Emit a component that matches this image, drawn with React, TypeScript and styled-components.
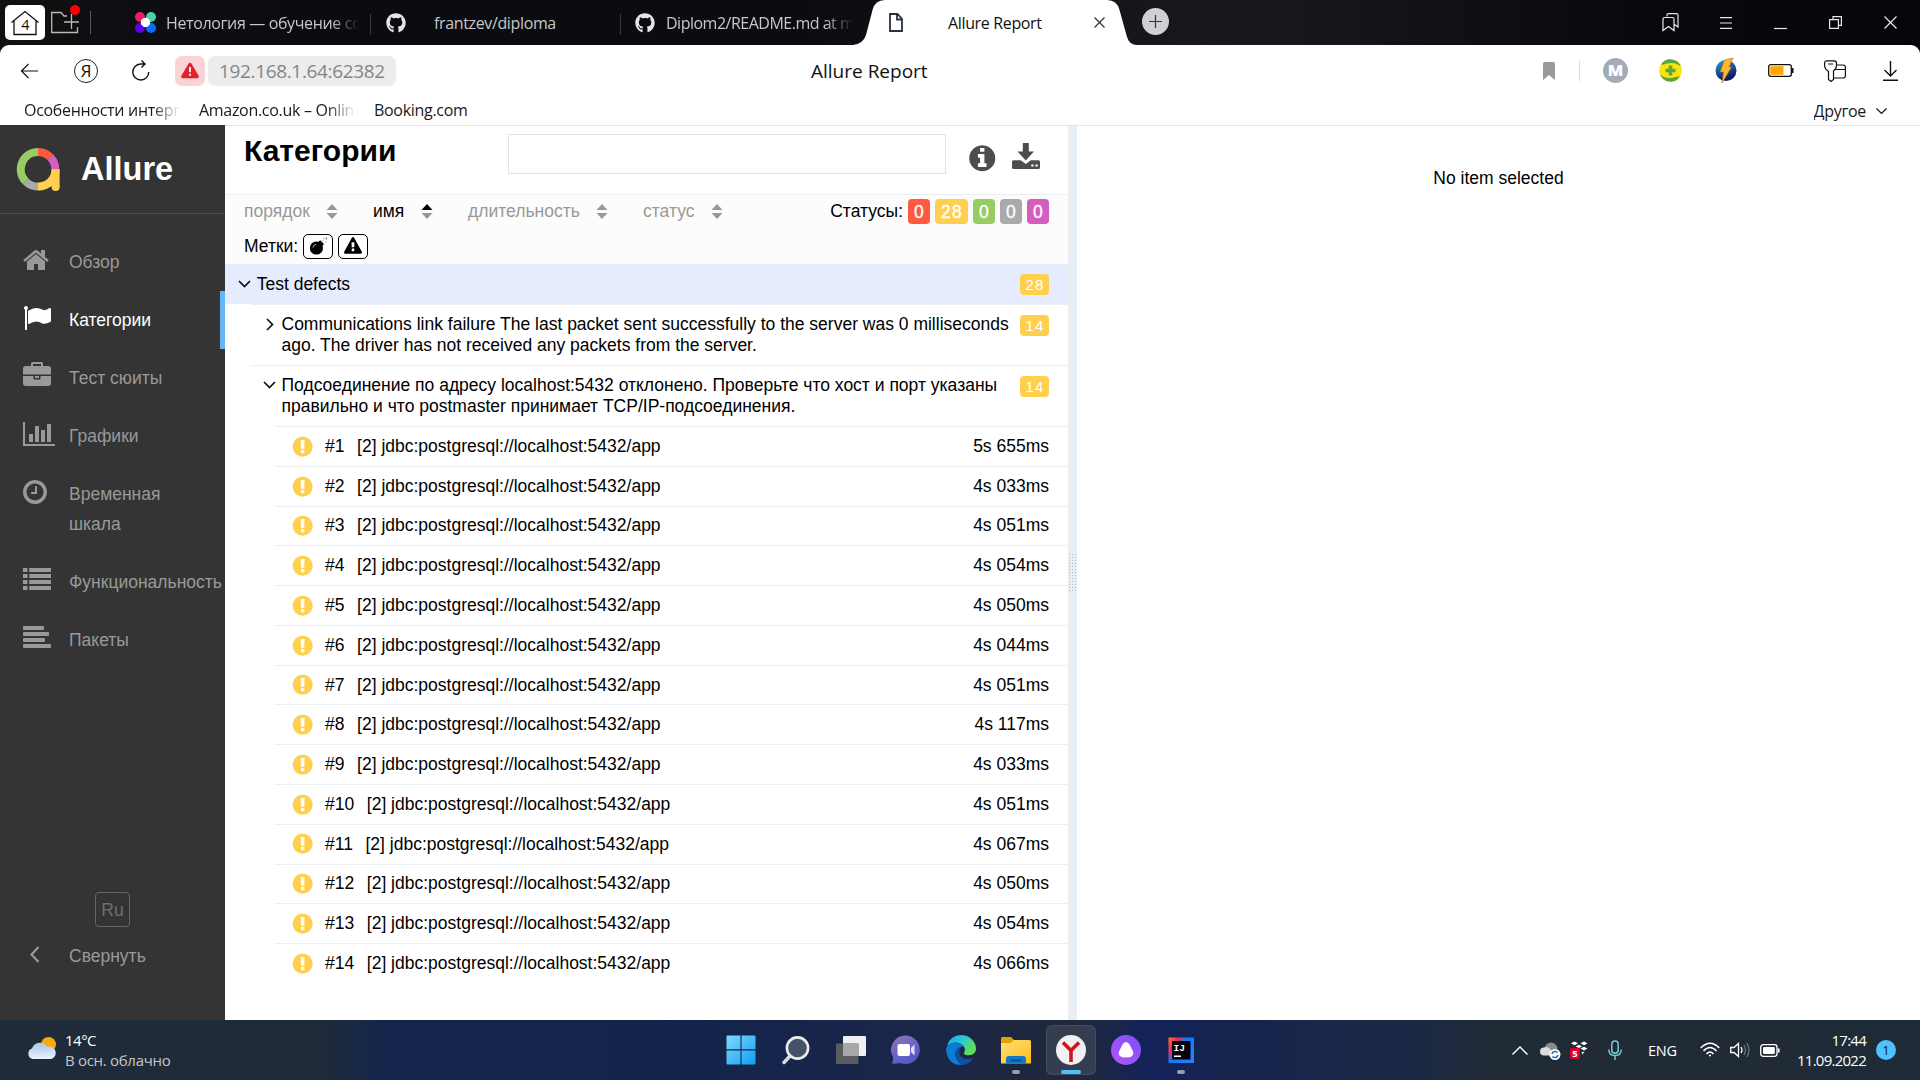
import React from "react";
import styled, { createGlobalStyle } from "styled-components";
import { FaGithub } from "react-icons/fa";

const ui = `"Open Sans", "Noto Sans", sans-serif`;
const arial = `"Liberation Sans", Arial, sans-serif`;

const Global = createGlobalStyle`
  *, *::before, *::after { box-sizing: border-box; }
  body { margin: 0; background: #fff; }
  svg { display: block; flex: none; overflow: visible; }
`;

const Screen = styled.div`
  width: 1920px;
  height: 1080px;
  overflow: hidden;
  display: flex;
  flex-direction: column;
  font-family: ${ui};
  background: #fff;
`;

/* ---------- tab strip ---------- */
const Chrome = styled.div`
  flex: none;
  background: linear-gradient(90deg, #111013 0, #0a0c11 300px, #0a0c11 800px, #16181e 1180px, #15171d 1300px, #08090d 1650px, #05060a 1920px);
`;
const TabStrip = styled.div`
  height: 45px;
  display: flex;
  padding-left: 5px;
`;
const HomeTab = styled.div`
  width: 40px;
  height: 35px;
  margin-top: 5px;
  background: #fff;
  border-radius: 5px;
  display: grid;
  place-items: center;
`;
const FolderButton = styled.div`
  width: 45px;
  padding: 4px 0 0 6px;
`;
const Separator = styled.div<{ $c: string; $top: number; $h: number }>`
  flex: none;
  width: 1px;
  height: ${(p) => p.$h}px;
  margin-top: ${(p) => p.$top}px;
  background: ${(p) => p.$c};
`;
const Tab = styled.div<{ $w: number; $pad: number; $gap: number }>`
  flex: none;
  width: ${(p) => p.$w}px;
  padding-left: ${(p) => p.$pad}px;
  display: flex;
  align-items: center;
  gap: ${(p) => p.$gap}px;
  color: #e6e6e6;
`;
const TabText = styled.div<{ $w?: number; $ls?: number }>`
  width: ${(p) => (p.$w ? p.$w + "px" : "auto")};
  margin-top: 1px;
  overflow: hidden;
  white-space: nowrap;
  color: #c6c7c8;
  font-size: 16px;
  line-height: 24px;
  letter-spacing: ${(p) => p.$ls ?? -0.36}px;
  ${(p) => p.$w && "mask-image: linear-gradient(90deg, #000 calc(100% - 28px), transparent);"}
`;
const ActiveTab = styled.div`
  flex: none;
  position: relative;
  width: 284px;
  padding-left: 36px;
  display: flex;
  align-items: center;
`;
const TabShape = styled.svg`
  position: absolute;
  left: 0;
  top: 0;
`;
const ActiveContent = styled.div`
  position: relative;
  display: flex;
  align-items: center;
  width: 216px;
`;
const ActiveText = styled.div`
  margin: 1px 0 0 45px;
  flex: 1;
  font-size: 16px;
  line-height: 24px;
  letter-spacing: -0.35px;
  color: #111;
  white-space: nowrap;
`;
const PlusButton = styled.div`
  width: 27px;
  height: 27px;
  margin: 8px 0 0 5px;
  border-radius: 50%;
  background: #cfd0d3;
  display: grid;
  place-items: center;
`;
const WindowButtons = styled.div`
  display: flex;
  margin-left: auto;
  padding-right: 2px;
`;
const Cell = styled.div`
  width: 55px;
  height: 100%;
  display: grid;
  place-items: center;
`;

/* ---------- address bar ---------- */
const AddressBar = styled.div`
  height: 51px;
  background: #fff;
  border-radius: 9px 9px 0 0;
  display: grid;
  grid-template-columns: 811px 1fr auto;
`;
const NavArea = styled.div`
  display: flex;
  align-items: center;
  padding-left: 20px;
`;
const YaButton = styled.div`
  width: 24px;
  height: 24px;
  margin: 0 34px 0 36px;
  border: 1.5px solid #222;
  border-radius: 50%;
  display: grid;
  place-items: center;
  font-size: 17px;
  line-height: 20px;
  color: #111;
`;
const Danger = styled.div`
  width: 30px;
  height: 30px;
  margin: 0 3px 0 25px;
  border-radius: 7px;
  background: #fcd3d4;
  display: grid;
  place-items: center;
`;
const Address = styled.div`
  width: 188px;
  height: 30px;
  padding-left: 11px;
  border-radius: 7px;
  background: #ececec;
  color: #858585;
  font-size: 19px;
  line-height: 31px;
  letter-spacing: -0.35px;
  white-space: nowrap;
`;
const PageTitle = styled.div`
  align-self: center;
  font-size: 19px;
  line-height: 28px;
  color: #111;
  white-space: nowrap;
`;
const Extensions = styled.div`
  display: flex;
  align-items: center;
  padding-right: 2px;
`;
const Avatar = styled.div`
  width: 25px;
  height: 25px;
  border-radius: 50%;
  background: #a1acb8;
  color: #fff;
  font-size: 16px;
  font-weight: 800;
  line-height: 25px;
  text-align: center;
`;
const BookmarkBar = styled.div`
  height: 30px;
  display: flex;
  padding: 0 33px 0 24px;
  background: #fff;
  border-bottom: 1px solid #e4e5e6;
`;
const Bookmark = styled.div<{ $w?: number }>`
  width: ${(p) => (p.$w ? p.$w + "px" : "auto")};
  margin-right: ${(p) => (p.$w ? 19 : 0)}px;
  overflow: hidden;
  white-space: nowrap;
  font-size: 16px;
  line-height: 28px;
  letter-spacing: -0.3px;
  color: #1a1a1a;
  ${(p) => p.$w && "mask-image: linear-gradient(90deg, #000 calc(100% - 28px), transparent);"}
`;
const OtherBookmarks = styled.div`
  margin-left: auto;
  display: flex;
  gap: 10px;
  align-items: center;
`;

/* ---------- report ---------- */
const Report = styled.div`
  flex: 1;
  min-height: 0;
  display: flex;
  font-family: ${arial};
  font-size: 17.5px;
  color: #000;
`;
const Side = styled.div`
  width: 225px;
  flex: none;
  display: flex;
  flex-direction: column;
  background: #343434;
  margin-top: -1px;
`;
const Brand = styled.div`
  height: 89px;
  display: flex;
  align-items: center;
  gap: 21px;
  padding: 0 0 0 17px;
  border-bottom: 1px solid #4d4d4d;
  color: #fff;
  font-size: 32.5px;
  font-weight: bold;
`;
const Menu = styled.div`
  padding-top: 19px;
`;
const MenuItem = styled.div<{ $active?: boolean; $last?: boolean }>`
  display: flex;
  align-items: flex-start;
  padding: ${(p) => (p.$last ? "0" : "14px 0")};
  line-height: 30px;
  white-space: pre-line;
  color: ${(p) => (p.$active ? "#fff" : "#999")};
  border-right: ${(p) => (p.$active ? "5px solid #64b5f6" : "0")};
`;
const MenuIcon = styled.div<{ $shift: number }>`
  width: 47px;
  margin: -1px 0 0 ${(p) => 22 - p.$shift}px;
  margin-right: ${(p) => p.$shift}px;
`;
const SideFooter = styled.div`
  margin-top: auto;
  height: 128px;
  display: flex;
  flex-direction: column;
`;
const LangButton = styled.div`
  width: 35px;
  height: 35px;
  margin: 0 0 14px 95px;
  border: 1px solid #666;
  border-radius: 4px;
  color: #6e6e6e;
  line-height: 34px;
  text-align: center;
`;

const Pane = styled.div`
  width: 843px;
  flex: none;
  display: flex;
  flex-direction: column;
`;
const PaneHead = styled.div`
  height: 69px;
  flex: none;
  display: flex;
  padding-left: 19px;
  border-bottom: 1px solid #eceff1;
`;
const PaneTitle = styled.div`
  width: 264px;
  padding-top: 7px;
  font-size: 30px;
  line-height: 36px;
  font-weight: bold;
`;
const Search = styled.div`
  width: 438px;
  height: 40px;
  margin-top: 8px;
  border: 1px solid #e3e4e5;
`;
const HeadIcon = styled.div<{ $left: number; $top: number }>`
  margin: ${(p) => p.$top}px 0 0 ${(p) => p.$left}px;
`;
const Controls = styled.div`
  height: 70px;
  flex: none;
  padding: 4px 19px 0 19px;
  background: #fcfcfc;
  border-bottom: 1px solid #eceff1;
`;
const ControlRow = styled.div<{ $h: number }>`
  height: ${(p) => p.$h}px;
  display: flex;
  align-items: center;
  line-height: 21px;
`;
const Sorter = styled.div<{ $w: number; $on?: boolean }>`
  width: ${(p) => p.$w}px;
  display: flex;
  justify-content: space-between;
  align-items: center;
  margin-right: 35px;
  color: ${(p) => (p.$on ? "#000" : "#999")};
`;
const SorterText = styled.span`
  margin-bottom: 1px;
`;
const Statuses = styled.div`
  margin-left: auto;
  display: flex;
  gap: 5px;
`;
const StatusesLabel = styled.span`
  margin-top: 2px;
`;
const tones = { failed: "#fd5a3e", broken: "#ffd050", passed: "#97cc64", skipped: "#aaa", unknown: "#d35ebe" };
type Tone = keyof typeof tones;
const StatusBox = styled.span<{ $tone: Tone; $wide?: boolean }>`
  width: ${(p) => (p.$wide ? 33 : 22)}px;
  height: 25px;
  padding-left: 1px;
  border-radius: 4px;
  background: ${(p) => tones[p.$tone]};
  color: #fff;
  line-height: 26px;
  text-align: center;
  letter-spacing: 1.25px;
  -webkit-text-stroke: 0.3px #fff;
`;
const Mark = styled.span`
  width: 30px;
  height: 25px;
  margin-left: 5px;
  padding-bottom: 1px;
  border: 1px solid #000;
  border-radius: 5px;
  background: #fff;
  display: grid;
  place-items: center;
`;
const GroupRow = styled.div<{ $level: number; $h: number; $hi?: boolean }>`
  flex: none;
  height: ${(p) => p.$h}px;
  margin-left: ${(p) => p.$level * 25}px;
  padding: 9px 19px 0 13px;
  display: flex;
  background: ${(p) => (p.$hi ? "#e4ecfd" : "transparent")};
  border-top: ${(p) => (p.$hi ? 0 : 1)}px solid #eceff1;
  line-height: 21px;
`;
const Arrow = styled.div<{ $level: number }>`
  width: ${(p) => (p.$level ? 18.5 : 18.7)}px;
  padding-top: 6px;
`;
const RightArrow = styled.div`
  margin: -2px 0 0 3px;
`;
const GroupText = styled.div`
  flex: 1;
  white-space: nowrap;
`;
const Count = styled.span<{ $top?: number }>`
  width: 29px;
  height: 21px;
  margin-top: ${(p) => p.$top ?? 1}px;
  padding-left: 1px;
  border-radius: 4px;
  background: #ffd050;
  color: #fff;
  font-size: 15px;
  line-height: 22px;
  text-align: center;
  letter-spacing: 1.25px;
`;
const Leaf = styled.div`
  flex: none;
  height: 39.77px;
  margin-left: 50px;
  padding: 0 19px 0 16px;
  display: flex;
  align-items: center;
  border-top: 1px solid #eceff1;
  line-height: 21px;
  white-space: pre;
`;
const LeafOrder = styled.span`
  margin: 0 12.5px 0 10.8px;
`;
const LeafTime = styled.span`
  margin-left: auto;
`;
const Splitter = styled.div`
  width: 9px;
  flex: none;
  background: #e9eef2;
  display: grid;
  place-items: center;
`;
const Detail = styled.div`
  flex: 1;
  padding-top: 42px;
  text-align: center;
  line-height: 21px;
`;

/* ---------- taskbar ---------- */
const Taskbar = styled.div`
  flex: none;
  height: 60px;
  display: grid;
  grid-template-columns: 713px 495px 1fr;
  background: linear-gradient(90deg, #1f2c38 0, #1f2a38 320px, #15264b 375px, #13244c 700px, #1a2649 900px, #20283b 1080px, #13235a 1150px, #15244e 1220px, #1b2846 1400px, #212b36 1500px, #1e2a35 1920px);
`;
const Weather = styled.div`
  display: flex;
  padding: 10px 0 0 27px;
  gap: 8px;
`;
const WeatherText = styled.div`
  font-size: 15px;
  line-height: 20px;
  color: #c3c7cb;
  letter-spacing: -0.3px;
  white-space: nowrap;
`;
const Degrees = styled.div`
  color: #fff;
  letter-spacing: -0.5px;
`;
const Apps = styled.div`
  display: flex;
`;
const AppCell = styled.div<{ $on?: boolean; $run?: boolean }>`
  width: 50px;
  height: 50px;
  margin: 5px 2.5px;
  border-radius: 6px;
  display: flex;
  flex-direction: column;
  align-items: center;
  padding-top: 9px;
  background: ${(p) => (p.$on ? "rgba(255,255,255,.1)" : "transparent")};
  border: ${(p) => (p.$on ? "1px solid rgba(255,255,255,.08)" : "1px solid transparent")};
  &::after {
    content: "";
    margin-top: 5px;
    width: ${(p) => (p.$on ? 20 : 8)}px;
    height: 4px;
    border-radius: 2px;
    background: ${(p) => (p.$on ? "#4cc2ff" : p.$run ? "#9a9fae" : "transparent")};
  }
`;
const Tray = styled.div`
  display: flex;
  align-items: center;
  justify-content: flex-end;
  padding-right: 24px;
`;
const TrayIcon = styled.div<{ $mr: number }>`
  margin-right: ${(p) => p.$mr}px;
`;
const Lang = styled.div`
  width: 52px;
  font-size: 14.5px;
  letter-spacing: -0.2px;
  color: #fff;
`;
const Clock = styled.div`
  width: 86px;
  margin-right: 10px;
  text-align: right;
  font-size: 15px;
  line-height: 20px;
  letter-spacing: -0.75px;
  color: #fff;
`;
const Notice = styled.div`
  width: 20px;
  height: 20px;
  border-radius: 50%;
  background: #4cc2ff;
  color: #10202c;
  font-size: 13px;
  line-height: 20px;
  text-align: center;
`;

/* ---------- icons ---------- */
const Glyph = ({ d, size, w = 1792, color = "currentColor" }: { d: string; size: number; w?: number; color?: string }) => (
  <svg width={(size * w) / 1792} height={size} viewBox={`0 0 ${w} 1792`} fill={color}><path d={d} /></svg>
);
const P = {
  home: "M1472 992v480q0 26-19 45t-45 19h-384v-384h-256v384h-384q-26 0-45-19t-19-45v-480q0-1 .5-3t.5-3l575-474 575 474q1 2 1 6zm223-69l-62 74q-8 9-21 11h-3q-13 0-21-7l-692-577-692 577q-12 8-24 7-13-2-21-11l-62-74q-8-10-7-23.5t11-21.5l719-599q32-26 76-26t76 26l244 204v-195q0-14 9-23t23-9h192q14 0 23 9t9 23v408l219 182q10 8 11 21.5t-7 23.5z",
  flag: "M320 256q0 72-64 110v1266q0 13-9.5 22.5t-22.5 9.5h-64q-13 0-22.5-9.5t-9.5-22.5v-1266q-64-38-64-110 0-53 37.5-90.5t90.5-37.5 90.5 37.5 37.5 90.5zm1472 64v763q0 25-12.5 38.5t-39.5 27.5q-215 116-369 116-61 0-123.5-22t-108.5-48-115.5-48-142.5-22q-192 0-464 146-17 9-33 9-26 0-45-19t-19-45v-742q0-32 31-55 21-14 79-43 236-120 421-120 107 0 200 29t219 88q38 19 88 19 54 0 117.5-21t110-47 88-47 54.5-21q26 0 45 19t19 45z",
  briefcase: "M640 256h512v-128h-512v128zm1152 640v480q0 66-47 113t-113 47h-1472q-66 0-113-47t-47-113v-480h672v160q0 26 19 45t45 19h320q26 0 45-19t19-45v-160h672zm-768 0v128h-256v-128h256zm768-480v384h-1792v-384q0-66 47-113t113-47h352v-160q0-40 28-68t68-28h576q40 0 68 28t28 68v160h352q66 0 113 47t47 113z",
  chart: "M640 896v512h-256v-512h256zm384-512v1024h-256v-1024h256zm1024 1152v128h-2048v-1536h128v1408h1920zm-640-896v768h-256v-768h256zm384-384v1152h-256v-1152h256z",
  clock: "M1024 544v448q0 14-9 23t-23 9h-320q-14 0-23-9t-9-23v-64q0-14 9-23t23-9h224v-352q0-14 9-23t23-9h64q14 0 23 9t9 23zm416 352q0-148-73-273t-198-198-273-73-273 73-198 198-73 273 73 273 198 198 273 73 273-73 198-198 73-273zm224 0q0 209-103 385.5t-279.5 279.5-385.5 103-385.5-103-279.5-279.5-103-385.5 103-385.5 279.5-279.5 385.5-103 385.5 103 279.5 279.5 103 385.5z",
  list: "M0 128h288v256h-288zM400 128h1392v256h-1392zM0 512h288v256h-288zM400 512h1392v256h-1392zM0 896h288v256h-288zM400 896h1392v256h-1392zM0 1280h288v256h-288zM400 1280h1392v256h-1392z",
  left: "M64 128h1216q64 0 64 64v128q0 64-64 64h-1216q-64 0-64-64v-128q0-64 64-64zM64 512h1536q64 0 64 64v128q0 64-64 64h-1536q-64 0-64-64v-128q0-64 64-64zM64 896h1280q64 0 64 64v128q0 64-64 64h-1280q-64 0-64-64v-128q0-64 64-64zM64 1280h1664q64 0 64 64v128q0 64-64 64h-1664q-64 0-64-64v-128q0-64 64-64z",
  info: "M1152 1376v-160q0-14-9-23t-23-9h-96v-512q0-14-9-23t-23-9h-320q-14 0-23 9t-9 23v160q0 14 9 23t23 9h96v320h-96q-14 0-23 9t-9 23v160q0 14 9 23t23 9h448q14 0 23-9t9-23zm-128-896v-160q0-14-9-23t-23-9h-192q-14 0-23 9t-9 23v160q0 14 9 23t23 9h192q14 0 23-9t9-23zm640 416q0 209-103 385.5t-279.5 279.5-385.5 103-385.5-103-279.5-279.5-103-385.5 103-385.5 279.5-279.5 385.5-103 385.5 103 279.5 279.5 103 385.5z",
  alert: "M896 128q209 0 385.5 103t279.5 279.5 103 385.5-103 385.5-279.5 279.5-385.5 103-385.5-103-279.5-279.5-103-385.5 103-385.5 279.5-279.5 385.5-103zm128 1247v-190q0-14-9-23.5t-22-9.5h-192q-13 0-23 10t-10 23v190q0 13 10 23t23 10h192q13 0 22-9.5t9-23.5zm-2-344l18-621q0-12-10-18-10-8-24-8h-220q-14 0-24 8-10 6-10 18l17 621q0 10 10 17.5t24 7.5h185q14 0 23.5-7.5t10.5-17.5z",
  warn: "M1024 1375v-190q0-14-9.5-23.5t-22.5-9.5h-192q-13 0-22.5 9.5t-9.5 23.5v190q0 14 9.5 23.5t22.5 9.5h192q13 0 22.5-9.5t9.5-23.5zm-2-374l17-459q0-12-10-19-13-11-24-11h-220q-11 0-24 11-10 7-10 21l16 457q0 10 10 16.5t24 6.5h185q14 0 23.5-6.5t10.5-16.5zm-14-934l768 1408q35 63-2 126-17 29-46.5 46t-63.5 17h-1536q-34 0-63.5-17t-46.5-46q-37-63-2-126l768-1408q17-31 47-49t65-18 65 18 47 49z",
};
const Line = ({ w, h, d, c = "#111", s = 1.4 }: { w: number; h: number; d: string; c?: string; s?: number }) => (
  <svg width={w} height={h} viewBox={`0 0 ${w} ${h}`} fill="none" stroke={c} strokeWidth={s}><path d={d} /></svg>
);
const Sort = ({ on }: { on?: boolean }) => (
  <svg width="12" height="15" viewBox="0 0 12 15">
    <path d="M0.5 6L6 0L11.5 6Z" fill={on ? "#000" : "#999"} />
    <path d="M0.5 9L6 15L11.5 9Z" fill="#999" />
  </svg>
);
const AllureLogo = () => (
  <svg width="43" height="43" viewBox="0 0 43 43" fill="none" strokeWidth="8">
    <path d="M21 4A17.3 17.3 0 0 0 8.8 33.5" stroke="#97cc64" />
    <path d="M8.8 33.5A17.3 17.3 0 0 0 21 38.6" stroke="#aaa" />
    <path d="M21 4A17.3 17.3 0 0 1 33.2 9.1" stroke="#fd5a3e" />
    <path d="M33.2 9.1A17.3 17.3 0 0 1 38.3 21.3" stroke="#d35ebe" />
    <path d="M38.6 21.3A17.3 17.3 0 0 1 21 38.6" stroke="#ffd050" />
    <path d="M38.6 21.3V39" stroke="#ffd050" />
    <circle cx="38.6" cy="39" r="4" fill="#ffd050" stroke="none" />
  </svg>
);
const Bomb = () => (
  <svg width="19" height="18" viewBox="0 0 19 18">
    <circle cx="7.4" cy="11" r="6.6" />
    <path d="M8.8 5.2L11.2 3.2L15 7L13 9.2Z" />
    <path d="M4 10.5A4 4 0 0 1 7 7.2" stroke="#bbb" strokeWidth="1" fill="none" />
    <path d="M12.8 4.6L14.5 2.8M14 1.4H15.6M16.4 1.2H18.4M17.4 .4V3M16.2 4.2L17.4 5.6" stroke="#999" strokeWidth=".9" fill="none" />
  </svg>
);
const Download = () => (
  <svg width="28" height="26" viewBox="0 0 28 26" fill="#4d4d4d">
    <path d="M10.8 0H16.8V8.5H22L13.8 17.5L5.5 8.5H10.8Z" />
    <path d="M1.5 17.3H8.8L13.8 21L18.8 17.3H26.5Q28 17.3 28 18.8V24.5Q28 26 26.5 26H1.5Q0 26 0 24.5V18.8Q0 17.3 1.5 17.3ZM19.3 21.4V23.6H21.6V21.4ZM23.4 21.4V23.6H25.7V21.4Z" fillRule="evenodd" />
  </svg>
);

const menu = [
  { t: "Обзор", d: P.home, s: 0.5 },
  { t: "Категории", d: P.flag, s: -0.5, on: true },
  { t: "Тест сюиты", d: P.briefcase, s: -0.5 },
  { t: "Графики", d: P.chart, s: -0.5, w: 2048 },
  { t: "Временная\nшкала", d: P.clock, s: 1.5 },
  { t: "Функциональность", d: P.list, s: -0.5 },
  { t: "Пакеты", d: P.left, s: -0.5 },
];
const times = ["5s 655ms", "4s 033ms", "4s 051ms", "4s 054ms", "4s 050ms", "4s 044ms", "4s 051ms", "4s 117ms", "4s 033ms", "4s 051ms", "4s 067ms", "4s 050ms", "4s 054ms", "4s 066ms"];

const Down = () => <Line w={13} h={8} d="M1 1L6.500 6.500L12 1" s={1.7} />;
const Right = () => <RightArrow><Line w={8} h={13} d="M1 1L6.500 6.500L1 12" s={1.7} /></RightArrow>;

const WindowsIcon = () => (
  <svg width="30" height="30" viewBox="0 0 30 30">
    <defs><linearGradient id="win" x1="0" y1="0" x2="1" y2="1"><stop offset="0" stopColor="#7fdcfb" /><stop offset="1" stopColor="#109cf5" /></linearGradient></defs>
    <path fill="url(#win)" d="M1.5 .5H14.5V14.3H.5V1.5Q.5 .5 1.5 .5ZM15.6 .5H28.5Q29.5 .5 29.5 1.5V14.3H15.6ZM.5 15.5H14.5V29.5H1.5Q.5 29.5 .5 28.5ZM15.6 15.5H29.5V28.5Q29.5 29.5 28.5 29.5H15.6Z" />
  </svg>
);
const SearchIcon = () => (
  <svg width="30" height="30" viewBox="0 0 30 30">
    <path d="M9.5 20.5L3 27.5" stroke="#dcdcdc" strokeWidth="3.4" strokeLinecap="round" />
    <circle cx="16.5" cy="13" r="10.6" fill="#44536a" stroke="#ececec" strokeWidth="2.6" />
  </svg>
);
const TaskViewIcon = () => (
  <svg width="30" height="30" viewBox="0 0 30 30">
    <rect x="7" y="1" width="23" height="20" rx="1" fill="#f0f0f0" />
    <rect x="0" y="8.5" width="22.5" height="20.5" rx="1" fill="#5c5c5e" />
    <path d="M7 8.5H22.5V21H7Z" fill="#a8a8a8" />
  </svg>
);
const ChatIcon = () => (
  <svg width="30" height="30" viewBox="0 0 30 30">
    <defs><linearGradient id="chat" x1="0" y1="0" x2=".6" y2="1"><stop offset="0" stopColor="#8f75b8" /><stop offset="1" stopColor="#4f58cb" /></linearGradient></defs>
    <path fill="url(#chat)" d="M15 .5A14.3 14.3 0 1 1 9 28Q5 29 1.2 28.6Q.8 28 1.6 26.5Q2.6 24.5 2 22A14.3 14.3 0 0 1 15 .5Z" />
    <rect x="6.5" y="9" width="12.5" height="12" rx="2" fill="#fff" />
    <path d="M20 13L23.5 9.6V20.4L20 17Z" fill="#e5e2fa" />
  </svg>
);
const EdgeIcon = () => (
  <svg width="30" height="30" viewBox="0 0 30 30">
    <defs>
      <linearGradient id="e1" x1="0" y1="0" x2="1" y2=".5"><stop offset="0" stopColor="#1aa3e8" /><stop offset=".5" stopColor="#2cc5dd" /><stop offset="1" stopColor="#5fe052" /></linearGradient>
    </defs>
    <path fill="url(#e1)" d="M1 10.5Q4.5 0 15 0Q24 0 28.5 8Q31.500 14 28.500 18Q25.500 21 20 20Q17 19 18.500 16.500Q20 13 16.500 10Q10 5 1 10.500Z" />
    <path fill="#0c7bd4" d="M0 14.500Q1 8 8 7.500Q15 7.500 17.500 11.500Q11.500 11.500 9.500 17Q8.500 24 16 29.900Q1.500 30.500 0 14.500Z" />
    <path fill="#114e9c" d="M9.500 17Q11 12 15 12Q11 17 15 21.500Q20 26 27.500 22.500Q23.500 30 16 29.900Q8.500 25 9.500 17Z" />
  </svg>
);
const ExplorerIcon = () => (
  <svg width="30" height="30" viewBox="0 0 30 30">
    <defs><linearGradient id="fold" x1="0" y1="0" x2="1" y2="1"><stop offset="0" stopColor="#ffe07a" /><stop offset="1" stopColor="#fdbd18" /></linearGradient></defs>
    <path d="M0 3.500Q0 2 1.500 2H10L13 5V9H0Z" fill="#e0a106" />
    <path d="M0 8H9.500L13 5H28.500Q30 5 30 6.500V28.500H0Z" fill="url(#fold)" />
    <path d="M5 28.500V24Q5 21 8 21H22Q25 21 25 24V28.500Z" fill="#0f78c8" />
    <rect x="9.500" y="24.500" width="11" height="1.800" rx=".9" fill="#0a4f8e" />
  </svg>
);
const YandexIcon = () => (
  <svg width="30" height="30" viewBox="0 0 30 30">
    <circle cx="15" cy="15" r="15" fill="#f1f1f1" />
    <path d="M7 7.500L15 15.500L23 7.500M15 15V27" stroke="#d3131b" strokeWidth="3.600" fill="none" />
  </svg>
);
const AliceIcon = () => (
  <svg width="30" height="30" viewBox="0 0 30 30">
    <defs><linearGradient id="al" x1="1" y1="0" x2="0" y2="1"><stop offset="0" stopColor="#7a4ff5" /><stop offset="1" stopColor="#b455fb" /></linearGradient></defs>
    <circle cx="15" cy="15" r="15" fill="url(#al)" />
    <path d="M15 7Q17 7 18.500 9.500L22 16.500Q24 22.500 15 22.500Q6 22.500 8 16.500L11.500 9.500Q13 7 15 7Z" fill="#fff" />
  </svg>
);
const IdeaIcon = () => (
  <svg width="30" height="30" viewBox="0 0 30 30">
    <defs><linearGradient id="ij" x1="0" y1="0" x2="1" y2=".7"><stop offset="0" stopColor="#fc801d" /><stop offset=".25" stopColor="#fe2857" /><stop offset=".5" stopColor="#087cfa" /><stop offset="1" stopColor="#2a7dfb" /></linearGradient></defs>
    <rect x="2.500" y="2.500" width="25.500" height="25.500" fill="url(#ij)" />
    <rect x="6" y="6" width="18.500" height="18.500" fill="#06030a" />
    <text x="7.500" y="15.500" fill="#fff" fontSize="9.500" fontWeight="bold" fontFamily="Liberation Mono, monospace">IJ</text>
    <rect x="8" y="20.500" width="7" height="1.500" fill="#fff" />
  </svg>
);

const grip = [0.5, 3.5, 6.5].map((x) => `M${x} 0V38`).join("");

export default function App() {
  return (
    <Screen>
      <Global />
      <Chrome>
        <TabStrip>
          <HomeTab>
            <svg width="30" height="26" viewBox="0 0 30 26" fill="none" stroke="#111" strokeWidth="1.3">
              <path d="M1.500 12.500L15 1.500L28.500 12.500M4 10.500V24.500H26V10.500" />
              <text x="15.300" y="20" textAnchor="middle" fontSize="14.500" fill="#111" stroke="none">4</text>
            </svg>
          </HomeTab>
          <FolderButton>
            <svg width="30" height="32" viewBox="0 0 30 32" fill="none" stroke="#b9b9b9" strokeWidth="1.300">
              <path d="M16 12H13L10 8.500H.7V28.500H26.500V23M13 18H28M20.500 10V25" />
              <circle cx="24" cy="6" r="5" fill="#f00" stroke="none" />
            </svg>
          </FolderButton>
          <Separator $c="#5b5b5e" $top={11} $h={23} />
          <Tab $w={279} $pad={44} $gap={10}>
            <svg width="21" height="21" viewBox="0 0 21 21">
              <circle cx="5" cy="5" r="5" fill="#e91e63" /><circle cx="16" cy="5" r="5" fill="#49d1a0" />
              <circle cx="5" cy="16" r="5" fill="#6200ee" /><circle cx="16" cy="16" r="5" fill="#0a6bff" />
              <circle cx="10.500" cy="10.500" r="4.700" fill="#fff" />
            </svg>
            <TabText $w={193}>Нетология — обучение со</TabText>
          </Tab>
          <Separator $c="#3a3b3f" $top={14} $h={21} />
          <Tab $w={249} $pad={15} $gap={28}>
            <FaGithub size={20} />
            <TabText>frantzev/diploma</TabText>
          </Tab>
          <Separator $c="#3a3b3f" $top={14} $h={21} />
          <Tab $w={232} $pad={14} $gap={11}>
            <FaGithub size={20} />
            <TabText $w={193} $ls={-0.5}>Diplom2/README.md at m</TabText>
          </Tab>
          <ActiveTab>
            <TabShape width="284" height="45" viewBox="0 0 284 45" fill="#fff">
              <path d="M0 45Q10 44 13 35L19.500 10Q22 0 32 0H254Q264 0 266.500 10L274 37Q276.500 45 284 45Z" />
            </TabShape>
            <ActiveContent>
              <Line w={14} h={19} d="M1 1H8.500L13 6V18H1ZM8 1V6.500H13" c="#26303e" s={1.8} />
              <ActiveText>Allure Report</ActiveText>
              <Line w={11} h={11} d="M.5 .5L10.500 10.500M10.500 .5L.5 10.500" c="#333" s={1.2} />
            </ActiveContent>
          </ActiveTab>
          <PlusButton><Line w={13} h={13} d="M6.500 0V13M0 6.500H13" c="#333" s={1.2} /></PlusButton>
          <WindowButtons>
            <Cell><Line w={17} h={19} c="#e8e8e8" s={1.200} d="M5 3.500V2Q5 .6 6.500 .6H14.500Q16 .6 16 2V14L12.500 11.500M1 6Q1 4.500 2.500 4.500H10.500Q12 4.500 12 6V17.500L6.500 13.500L1 17.500Z" /></Cell>
            <Cell><Line w={12} h={12} c="#e8e8e8" s={1.200} d="M0 .6H12M0 6H12M0 11.400H12" /></Cell>
            <Cell><Line w={13} h={13} c="#e8e8e8" s={1.200} d="M0 12.500H13" /></Cell>
            <Cell><Line w={13} h={13} c="#e8e8e8" s={1.200} d="M.6 3.600H9.400V12.400H.6ZM4 3.600V.6H12.400V9.400H9.400" /></Cell>
            <Cell><Line w={13} h={13} c="#e8e8e8" s={1.200} d="M.5 .5L12.500 12.500M12.500 .5L.5 12.500" /></Cell>
          </WindowButtons>
        </TabStrip>
        <AddressBar>
          <NavArea>
            <Line w={18} h={16} s={1.2} d="M18 8H1.500M8.500 1L1.500 8L8.500 15" />
            <YaButton>Я</YaButton>
            <Line w={18} h={21} d="M16.800 12A8 8 0 1 1 8.500 4H13M9.500 .5L13 4L9.500 7.500" />
            <Danger>
              <svg width="18" height="17" viewBox="0 0 20 17"><path d="M8.300 1Q10-1 11.700 1L19.500 14Q20.500 17 18 17H2Q-.5 17 .5 14Z" fill="#e0222d" /><path d="M9 4.500H11V10.500H9ZM9 12.200H11V14.400H9Z" fill="#fff" /></svg>
            </Danger>
            <Address>192.168.1.64:62382</Address>
          </NavArea>
          <PageTitle>Allure Report</PageTitle>
          <Extensions>
            <svg width="12" height="18" viewBox="0 0 12 18"><path d="M0 1.500Q0 0 1.500 0H10.500Q12 0 12 1.500V18L6 13L0 18Z" fill="#999" /></svg>
            <svg width="33" height="20" viewBox="0 0 33 20"><path d="M24.500 0V20" stroke="#dcdcdc" /></svg>
            <Cell><Avatar>M</Avatar></Cell>
            <Cell>
              <svg width="23" height="23" viewBox="0 0 23 23"><circle cx="11.500" cy="11.500" r="11.300" fill="#fbe30c" /><path d="M2 5.500A11.300 11.300 0 0 1 22 7.500Q16 2.500 8.500 4.500Q4.500 6 2 5.500ZM21 17.500A11.300 11.300 0 0 1 1 15.500Q7 20.500 14.500 18.500Q18.500 17 21 17.500Z" fill="#5aa63c" /><path d="M11.500 6.500V16.500M6.500 11.500H16.500" stroke="#5aa63c" strokeWidth="3.600" /></svg>
            </Cell>
            <Cell>
              <svg width="22" height="25" viewBox="0 0 22 25"><defs><linearGradient id="bl" x1="0" y1="0" x2=".4" y2="1"><stop offset="0" stopColor="#2fa3d8" /><stop offset="1" stopColor="#0a1560" /></linearGradient></defs><circle cx="11" cy="12.500" r="10.500" fill="url(#bl)" /><path d="M9.500 2L18 0L14 9H16.500L7 25L8.500 14H5Z" fill="#fdb92a" stroke="#c8631a" strokeWidth=".6" /></svg>
            </Cell>
            <Cell>
              <svg width="26" height="13" viewBox="0 0 26 13"><rect x=".7" y=".7" width="22.600" height="11.600" rx="2" fill="none" stroke="#111" strokeWidth="1.300" /><rect x="2.200" y="2.200" width="13.300" height="8.600" fill="#ffa500" /><rect x="23.500" y="4" width="2" height="5" fill="#111" /></svg>
            </Cell>
            <Cell><Line w={24} h={22} s={1.2} d="M4.500 11.500Q.6 9 .6 5.500V3Q.6 .8 3 .8H10Q12.500 .8 12.500 3V5.500Q12.500 9 9.500 11V19.500L7 21.400L4.500 19.500ZM4 4H9M12.500 5H19Q21.400 5 21.400 7.500V15.500Q21.400 18 19 18H10M12 9.500H21.400" /></Cell>
            <Cell><Line w={15} h={20} d="M7.500 0V15M1.500 9L7.500 15L13.500 9M0 19.300H15" /></Cell>
          </Extensions>
        </AddressBar>
        <BookmarkBar>
          <Bookmark $w={156}>Особенности интерп</Bookmark>
          <Bookmark $w={156}>Amazon.co.uk – Onlin</Bookmark>
          <Bookmark>Booking.com</Bookmark>
          <OtherBookmarks>
            <Bookmark>Другое</Bookmark>
            <Line w={11} h={6} d="M.5 .5L5.500 5.500L10.500 .5" s={1.200} />
          </OtherBookmarks>
        </BookmarkBar>
      </Chrome>

      <Report>
        <Side>
          <Brand><AllureLogo /><span>Allure</span></Brand>
          <Menu>
            {menu.map((m) => (
              <MenuItem key={m.t} $active={m.on}>
                <MenuIcon $shift={m.s}><Glyph d={m.d} size={28} w={m.w} /></MenuIcon>
                <span>{m.t}</span>
              </MenuItem>
            ))}
          </Menu>
          <SideFooter>
            <LangButton>Ru</LangButton>
            <MenuItem $last>
              <MenuIcon $shift={-8}><Line w={10} h={28} c="#999" s={2.200} d="M8.500 7L1.500 14.500L8.500 22" /></MenuIcon>
              <span>Свернуть</span>
            </MenuItem>
          </SideFooter>
        </Side>

        <Pane>
          <PaneHead>
            <PaneTitle>Категории</PaneTitle>
            <Search />
            <HeadIcon $left={21} $top={17}><Glyph d={P.info} size={30.5} color="#4d4d4d" /></HeadIcon>
            <HeadIcon $left={14.5} $top={17}><Download /></HeadIcon>
          </PaneHead>
          <Controls>
            <ControlRow $h={25}>
              <Sorter $w={94}><SorterText>порядок</SorterText><Sort /></Sorter>
              <Sorter $w={60} $on><SorterText>имя</SorterText><Sort on /></Sorter>
              <Sorter $w={140}><SorterText>длительность</SorterText><Sort /></Sorter>
              <Sorter $w={80}><SorterText>статус</SorterText><Sort /></Sorter>
              <Statuses>
                <StatusesLabel>Статусы:</StatusesLabel>
                <StatusBox $tone="failed">0</StatusBox>
                <StatusBox $tone="broken" $wide>28</StatusBox>
                <StatusBox $tone="passed">0</StatusBox>
                <StatusBox $tone="skipped">0</StatusBox>
                <StatusBox $tone="unknown">0</StatusBox>
              </Statuses>
            </ControlRow>
            <ControlRow $h={45}>
              <span>Метки:</span>
              <Mark><Bomb /></Mark>
              <Mark><Glyph d={P.warn} size={18} color="#000" /></Mark>
            </ControlRow>
          </Controls>
          <GroupRow $level={0} $h={39.3} $hi>
            <Arrow $level={0}><Down /></Arrow>
            <GroupText>Test defects</GroupText>
            <Count $top={0}>28</Count>
          </GroupRow>
          <GroupRow $level={1} $h={60.9}>
            <Arrow $level={1}><Right /></Arrow>
            <GroupText>Communications link failure The last packet sent successfully to the server was 0 milliseconds<br />ago. The driver has not received any packets from the server.</GroupText>
            <Count>14</Count>
          </GroupRow>
          <GroupRow $level={1} $h={60.9}>
            <Arrow $level={1}><Down /></Arrow>
            <GroupText>Подсоединение по адресу localhost:5432 отклонено. Проверьте что хост и порт указаны<br />правильно и что postmaster принимает TCP/IP-подсоединения.</GroupText>
            <Count>14</Count>
          </GroupRow>
          {times.map((t, i) => (
            <Leaf key={i}>
              <Glyph d={P.alert} size={23.3} color="#ffd050" />
              <LeafOrder>#{i + 1}</LeafOrder>
              <span>[2] jdbc:postgresql://localhost:5432/app</span>
              <LeafTime>{t}</LeafTime>
            </Leaf>
          ))}
        </Pane>
        <Splitter>
          <svg width="7" height="38" viewBox="0 0 7 38"><path d={grip} stroke="#b3b9bd" strokeWidth="1" strokeDasharray="1 2" /></svg>
        </Splitter>
        <Detail>No item selected</Detail>
      </Report>

      <Taskbar>
        <Weather>
          <svg width="30" height="30" viewBox="0 0 30 30">
            <defs><linearGradient id="cl" x1="0" y1="0" x2="0" y2="1"><stop offset="0" stopColor="#a8c4ee" /><stop offset="1" stopColor="#edf2fa" /></linearGradient></defs>
            <circle cx="21.500" cy="14.500" r="7.500" fill="#fba90b" />
            <path d="M5.500 29A5.500 5.500 0 0 1 5 18.500A8.500 8.500 0 0 1 20.500 17A6.200 6.200 0 1 1 22 29Z" fill="url(#cl)" />
          </svg>
          <WeatherText><Degrees>14°C</Degrees>В осн. облачно</WeatherText>
        </Weather>
        <Apps>
          <AppCell><WindowsIcon /></AppCell>
          <AppCell><SearchIcon /></AppCell>
          <AppCell><TaskViewIcon /></AppCell>
          <AppCell><ChatIcon /></AppCell>
          <AppCell><EdgeIcon /></AppCell>
          <AppCell $run><ExplorerIcon /></AppCell>
          <AppCell $on><YandexIcon /></AppCell>
          <AppCell><AliceIcon /></AppCell>
          <AppCell $run><IdeaIcon /></AppCell>
        </Apps>
        <Tray>
          <TrayIcon $mr={12}><Line w={16} h={9} c="#fff" d="M.5 8.500L8 1L15.500 8.500" /></TrayIcon>
          <TrayIcon $mr={9}>
            <svg width="21" height="20" viewBox="0 0 21 20"><circle cx="11" cy="9" r="6.500" fill="#8a8a8a" /><path d="M4 15.500A4 4 0 0 1 4 7.500Q8 5.500 11 10L17 12V15.500Z" fill="#dcdcdc" /><circle cx="15" cy="14.500" r="5.500" fill="#fff" /><path d="M12 14A3.200 3.200 0 0 1 17.500 12.500M18 15A3.200 3.200 0 0 1 12.500 16.500" stroke="#1b74c8" strokeWidth="1.500" fill="none" /></svg>
          </TrayIcon>
          <TrayIcon $mr={20}>
            <svg width="18" height="20" viewBox="0 0 18 20"><path d="M1 3.300L4.500 1.500L8 3.300L4.500 5.200ZM10.500 3.300L14 1.500L17.500 3.300L14 5.200ZM10.500 8.500L14 6.700L17.500 8.500L14 10.500ZM5.500 6.500L9 4.800L12 6.500L9 8ZM11.500 12.200L14.500 11.500L12.500 14.500Z" fill="#fff" /><rect x="0" y="8" width="10" height="11" rx="1.500" fill="#d6002a" /><text x="5" y="17" fill="#fff" fontSize="9.500" fontWeight="bold" textAnchor="middle">5</text></svg>
          </TrayIcon>
          <TrayIcon $mr={26}>
            <Line w={14} h={20} c="#74c9e0" s={1.500} d="M3.800 4.200A3.200 3.200 0 0 1 10.200 4.200V10A3.200 3.200 0 0 1 3.800 10ZM.8 9.500Q.8 15.500 7 15.500Q13.200 15.500 13.200 9.500M7 15.500V20" />
          </TrayIcon>
          <Lang>ENG</Lang>
          <TrayIcon $mr={10}>
            <Line w={20} h={16} c="#fff" s={1.500} d="M.7 6Q10-3.500 19.300 6M3.500 9Q10 2 16.500 9M6.500 12Q10 8 13.500 12M9 13.500H11" />
          </TrayIcon>
          <TrayIcon $mr={10}>
            <svg width="20" height="16" viewBox="0 0 20 16" fill="none" stroke="#fff" strokeWidth="1.300"><path d="M.7 5.500H4L8.500 1.500V14.500L4 10.500H.7ZM11 5Q13 8 11 11" /><path d="M14 3Q17 8 14 13M17 1Q21 8 17 15" stroke="#6b757f" /></svg>
          </TrayIcon>
          <TrayIcon $mr={0}>
            <svg width="20" height="13" viewBox="0 0 20 13"><rect x=".7" y=".7" width="16.300" height="11.600" rx="2.500" fill="none" stroke="#fff" strokeWidth="1.300" /><rect x="3" y="3" width="11.800" height="7" rx="1" fill="#fff" /><path d="M18.700 4.500V8.500" stroke="#fff" strokeWidth="1.800" /></svg>
          </TrayIcon>
          <Clock>17:44<br />11.09.2022</Clock>
          <Notice>1</Notice>
        </Tray>
      </Taskbar>
    </Screen>
  );
}
